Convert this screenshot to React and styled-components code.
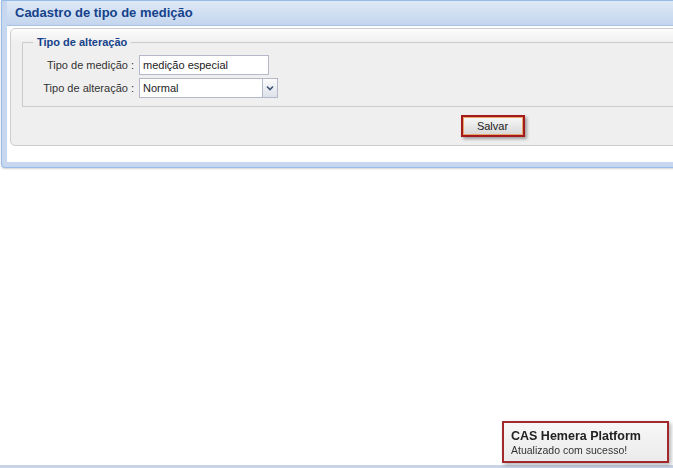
import React from 'react'
import styled, { createGlobalStyle } from 'styled-components'

const GlobalStyle = createGlobalStyle`
  html, body {
    margin: 0;
    padding: 0;
    background: #fff;
    overflow: hidden;
  }
  body {
    font-family: 'Liberation Sans', Arial, sans-serif;
    font-size: 11px;
    color: #222;
  }
`

const Chevron = () => (
  <svg width='8' height='6' viewBox='0 0 8 6'>
    <path d='M1 1.5 L4 4.5 L7 1.5' fill='none' stroke='#3d5479' strokeWidth='1.6' />
  </svg>
)

const App = () => {
  return (
    <Page>
      <GlobalStyle />
      <Window>
        <Header>Cadastro de tipo de medição</Header>
        <Content>
          <Panel>
            <Fieldset>
              <Legend>Tipo de alteração</Legend>
              <Row>
                <Label>Tipo de medição :</Label>
                <TextField readOnly value='medição especial' />
              </Row>
              <Row>
                <Label>Tipo de alteração :</Label>
                <Combo>
                  <ComboText>Normal</ComboText>
                  <Trigger>
                    <Chevron />
                  </Trigger>
                </Combo>
              </Row>
            </Fieldset>
            <ButtonBar>
              <SaveButton>Salvar</SaveButton>
            </ButtonBar>
          </Panel>
        </Content>
      </Window>
      <Spacer />
      <StatusStrip />
      <Toast>
        <ToastTitle>CAS Hemera Platform</ToastTitle>
        <ToastText>Atualizado com sucesso!</ToastText>
      </Toast>
    </Page>
  )
}

const Page = styled.div`
  display: flex;
  flex-direction: column;
  height: 100vh;
  width: 100%;
  overflow: hidden;
`
const Window = styled.div`
  flex: none;
  width: 983px;
  margin-left: 1px;
  box-sizing: border-box;
  border: 1px solid #99bbe8;
  border-radius: 0 0 4px 4px;
  background: #c6d7ef;
  padding: 0 5px 5px 5px;
  box-shadow: 0 1px 2px rgba(0, 0, 0, 0.18);
`
const Header = styled.div`
  height: 24px;
  line-height: 24px;
  padding-left: 8px;
  background: linear-gradient(#dfe9f6, #c3d5ee);
  border-bottom: 1px solid #a9c0e2;
  font-size: 13px;
  font-weight: bold;
  color: #15428b;
`
const Content = styled.div`
  background: #fff;
  padding: 2px 3px 16px 3px;
`
const Panel = styled.div`
  border: 1px solid #cdcdcd;
  border-radius: 5px;
  background: linear-gradient(#fcfcfc, #efefef 14px);
  padding: 7px 11px 8px 11px;
`
const Fieldset = styled.fieldset`
  margin: 0;
  border: 1px solid #cbcbcb;
  padding: 6px 10px 8px 10px;
  display: flex;
  flex-direction: column;
  gap: 3px;
`
const Legend = styled.legend`
  padding: 0 4px;
  font-size: 11px;
  line-height: 13px;
  font-weight: bold;
  color: #15428b;
`
const Row = styled.div`
  display: flex;
  align-items: center;
  height: 20px;
`
const Label = styled.label`
  width: 101px;
  margin-right: 5px;
  text-align: right;
  white-space: nowrap;
  color: #333;
  line-height: 20px;
`
const TextField = styled.input`
  width: 130px;
  height: 20px;
  box-sizing: border-box;
  border: 1px solid #b5b8c8;
  padding: 0 3px;
  font-family: inherit;
  font-size: 11px;
  color: #222;
  background: #fff;
  outline: none;
`
const Combo = styled.div`
  display: flex;
  width: 139px;
  height: 20px;
`
const ComboText = styled.div`
  flex: 1;
  box-sizing: border-box;
  border: 1px solid #b5b8c8;
  border-right: none;
  background: #fff;
  padding: 0 3px;
  line-height: 18px;
`
const Trigger = styled.div`
  width: 16px;
  box-sizing: border-box;
  border: 1px solid #b5b8c8;
  background: linear-gradient(#fbfbfb, #dde2ea);
  display: flex;
  align-items: center;
  justify-content: center;
`
const ButtonBar = styled.div`
  display: flex;
  justify-content: center;
  margin-top: 8px;
`
const SaveButton = styled.button`
  width: 64px;
  height: 22px;
  box-sizing: border-box;
  border: 2px solid #a41a1c;
  background: linear-gradient(#f8f8f8, #d8d8d8);
  box-shadow: inset 0 0 0 1px #e9a46a, 2px 2px 3px rgba(0, 0, 0, 0.35);
  font-family: inherit;
  font-size: 11px;
  color: #222;
  padding: 0;
`
const Spacer = styled.div`
  flex: 1;
`
const StatusStrip = styled.div`
  flex: none;
  height: 3px;
  background: #c8d4e4;
`
const Toast = styled.div`
  position: fixed;
  right: 4px;
  bottom: 5px;
  width: 167px;
  height: 42px;
  box-sizing: border-box;
  border: 2px solid #a3282c;
  background: linear-gradient(#f7f7f7, #ebebeb);
  box-shadow: 2px 2px 4px rgba(0, 0, 0, 0.3);
  padding: 5px 7px;
`
const ToastTitle = styled.div`
  font-size: 12.5px;
  line-height: 16px;
  font-weight: bold;
  color: #222;
`
const ToastText = styled.div`
  font-size: 10.5px;
  line-height: 13px;
  color: #333;
`

export default App
